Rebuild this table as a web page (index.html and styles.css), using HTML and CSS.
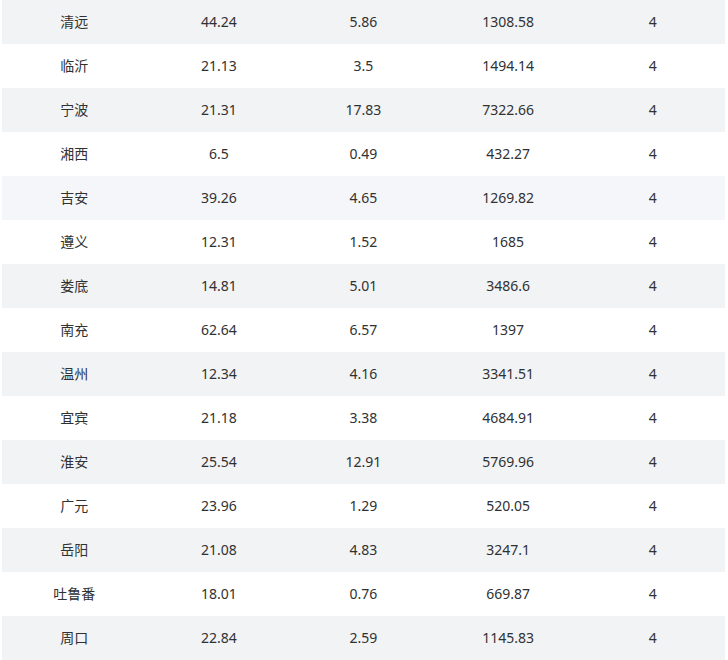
FILE: index.html
```html
<!DOCTYPE html>
<html lang="zh">
<head>
<meta charset="utf-8">
<link rel="stylesheet" href="styles.css">
</head>
<body>
<table class="data">
<tbody>
<tr class="alt"><td>清远</td><td>44.24</td><td>5.86</td><td>1308.58</td><td>4</td></tr>
<tr><td>临沂</td><td>21.13</td><td>3.5</td><td>1494.14</td><td>4</td></tr>
<tr class="alt"><td>宁波</td><td>21.31</td><td>17.83</td><td>7322.66</td><td>4</td></tr>
<tr><td>湘西</td><td>6.5</td><td>0.49</td><td>432.27</td><td>4</td></tr>
<tr class="hover"><td>吉安</td><td>39.26</td><td>4.65</td><td>1269.82</td><td>4</td></tr>
<tr><td>遵义</td><td>12.31</td><td>1.52</td><td>1685</td><td>4</td></tr>
<tr class="alt"><td>娄底</td><td>14.81</td><td>5.01</td><td>3486.6</td><td>4</td></tr>
<tr><td>南充</td><td>62.64</td><td>6.57</td><td>1397</td><td>4</td></tr>
<tr class="alt"><td>温州</td><td>12.34</td><td>4.16</td><td>3341.51</td><td>4</td></tr>
<tr><td>宜宾</td><td>21.18</td><td>3.38</td><td>4684.91</td><td>4</td></tr>
<tr class="alt"><td>淮安</td><td>25.54</td><td>12.91</td><td>5769.96</td><td>4</td></tr>
<tr><td>广元</td><td>23.96</td><td>1.29</td><td>520.05</td><td>4</td></tr>
<tr class="alt"><td>岳阳</td><td>21.08</td><td>4.83</td><td>3247.1</td><td>4</td></tr>
<tr><td>吐鲁番</td><td>18.01</td><td>0.76</td><td>669.87</td><td>4</td></tr>
<tr class="alt"><td>周口</td><td>22.84</td><td>2.59</td><td>1145.83</td><td>4</td></tr>
</tbody>
</table>
</body>
</html>
```
FILE: styles.css
```css
html, body {
  margin: 0;
  padding: 0;
  background: #ffffff;
}
body {
  padding-left: 2px;
  font-family: "Noto Sans", "Noto Sans CJK SC", sans-serif;
  font-size: 14px;
  color: #303133;
}
.data {
  width: 723px;
  border-collapse: collapse;
  table-layout: fixed;
}
.data td {
  height: 44px;
  padding: 0;
  text-align: center;
  vertical-align: middle;
  line-height: 20px;
}
.data tr.alt td {
  background: #f2f3f5;
}
.data tr.hover td {
  background: #f5f6fa;
}
```
